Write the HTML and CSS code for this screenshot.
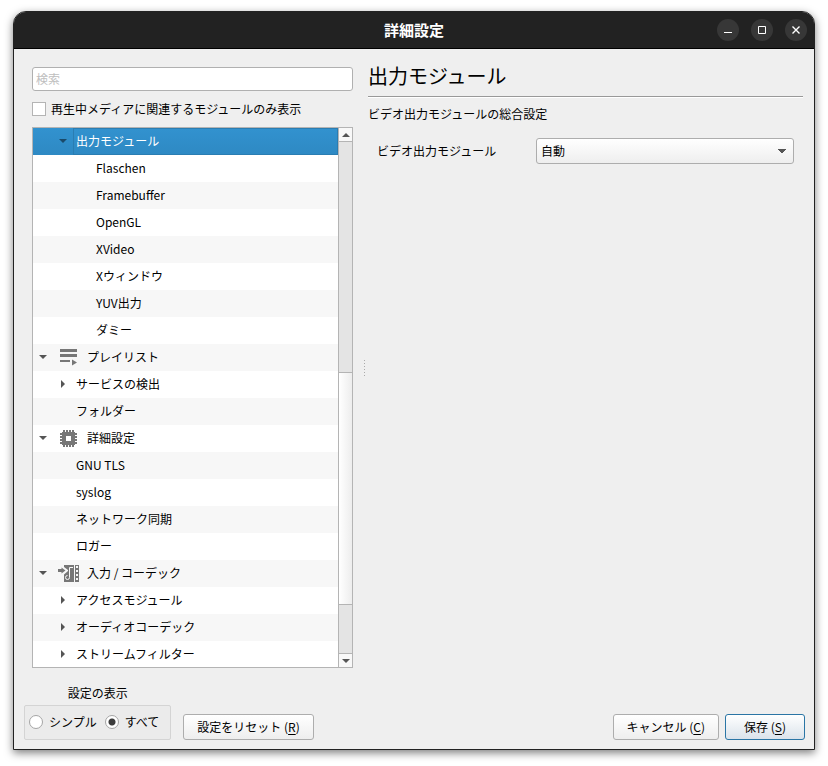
FILE: index.html
```html
<!DOCTYPE html>
<html lang="ja">
<head>
    <meta charset="UTF-8">
    <meta name="viewport" content="width=device-width, initial-scale=1.0">
    <title>詳細設定</title>
    <link rel="stylesheet" href="styles.css">
</head>
<body>

    <div class="window">
        <!-- Title bar -->
        <header class="titlebar">
            <h1>詳細設定</h1>
            <div class="window-buttons">
                <button type="button" aria-label="最小化"><svg width="22" height="22"><path d="M7 13.5h8"/></svg></button>
                <button type="button" aria-label="最大化"><svg width="22" height="22"><path d="M7.5 7.5h7v7h-7z"/></svg></button>
                <button type="button" aria-label="閉じる"><svg width="22" height="22"><path stroke-width="1.4" d="M7.500 7.500l7 7M14.500 7.500l-7 7"/></svg></button>
            </div>
        </header>

        <form class="content">
            <div class="panes">
                <!-- Module tree -->
                <section class="sidebar">
                    <input type="text" class="search" placeholder="検索" aria-label="検索">
                    <label class="only-current"><input type="checkbox"> 再生中メディアに関連するモジュールのみ表示</label>

                    <div class="tree">
                        <ul class="rows">
                            <li class="level-2 selected"><i class="arrow open"></i><span>出力モジュール</span></li>
                            <li class="level-3"><span>Flaschen</span></li>
                            <li class="level-3"><span>Framebuffer</span></li>
                            <li class="level-3"><span>OpenGL</span></li>
                            <li class="level-3"><span>XVideo</span></li>
                            <li class="level-3"><span>Xウィンドウ</span></li>
                            <li class="level-3"><span>YUV出力</span></li>
                            <li class="level-3"><span>ダミー</span></li>
                            <li class="level-1">
                                <i class="arrow open"></i>
                                <svg class="icon" width="20" height="20" viewBox="0 0 20 20"><path d="M1 2h17v3H1zM1 7h17v3H1zM1 13h10v2H1zM13 12.500l5 3-5 3z"/></svg>
                                <span>プレイリスト</span>
                            </li>
                            <li class="level-2"><i class="arrow"></i><span>サービスの検出</span></li>
                            <li class="level-2"><span>フォルダー</span></li>
                            <li class="level-1">
                                <i class="arrow open"></i>
                                <svg class="icon" width="20" height="20" viewBox="0 0 20 20">
                                    <path fill-rule="evenodd" d="M3 4h13v13H3zM7 8v5h5V8z"/>
                                    <path d="M4 2h2v3H4zM13 2h2v3h-2zM4 16h2v3H4zM13 16h2v3h-2zM7 2h2v3H7zM10 2h2v3h-2zM7 16h2v3H7zM10 16h2v3h-2zM1 5h3v2H1zM15 5h3v2h-3zM1 14h3v2H1zM15 14h3v2h-3zM1 8h3v2H1zM1 11h3v2H1zM15 8h3v2h-3zM15 11h3v2h-3z"/>
                                </svg>
                                <span>詳細設定</span>
                            </li>
                            <li class="level-2"><span>GNU TLS</span></li>
                            <li class="level-2"><span>syslog</span></li>
                            <li class="level-2"><span>ネットワーク同期</span></li>
                            <li class="level-2"><span>ロガー</span></li>
                            <li class="level-1">
                                <i class="arrow open"></i>
                                <svg class="icon" width="20" height="20" viewBox="0 0 20 20">
                                    <path d="M-1 6h3.500V4.500L6.500 7.500l-4 3V9H-1z"/>
                                    <path d="M5 2h10v17H5v-7.500L9 8V7L5 4z"/>
                                    <path fill-rule="evenodd" d="M16 2h4v17h-4zM17 3v2h2V3zM17 7v2h2V7zM17 11v2h2v-2zM17 15v2h2v-2z"/>
                                    <path class="note" d="M14 4.500h-3.500v10a2 2 0 1 1-2-2"/>
                                </svg>
                                <span>入力 / コーデック</span>
                            </li>
                            <li class="level-2"><i class="arrow"></i><span>アクセスモジュール</span></li>
                            <li class="level-2"><i class="arrow"></i><span>オーディオコーデック</span></li>
                            <li class="level-2"><i class="arrow"></i><span>ストリームフィルター</span></li>
                        </ul>
                        <div class="scrollbar">
                            <div class="scroll-button up"></div>
                            <div class="track"><div class="thumb"></div></div>
                            <div class="scroll-button down"></div>
                        </div>
                    </div>
                </section>

                <div class="splitter"></div>

                <!-- Settings of the selected module -->
                <section class="settings">
                    <h2>出力モジュール</h2>
                    <p>ビデオ出力モジュールの総合設定</p>
                    <div class="field">
                        <label for="vout">ビデオ出力モジュール</label>
                        <select id="vout"><option>自動</option></select>
                    </div>
                </section>
            </div>

            <!-- Bottom row -->
            <footer class="actions">
                <fieldset>
                    <legend>設定の表示</legend>
                    <div class="modes">
                        <label><input type="radio" name="mode"> シンプル</label>
                        <label><input type="radio" name="mode" checked> すべて</label>
                    </div>
                </fieldset>
                <button type="button" class="btn reset">設定をリセット (<u>R</u>)</button>
                <button type="button" class="btn cancel">キャンセル (<u>C</u>)</button>
                <button type="submit" class="btn save">保存 (<u>S</u>)</button>
            </footer>
        </form>
    </div>

</body>
</html>
```
FILE: styles.css
```css
* {
    box-sizing: border-box;
}
body {
    margin: 0;
    padding: 11px 13px 17px;
    min-height: 100vh;
    display: flex;
    background: #fff;
    color: #000;
    font-family: "Noto Sans CJK JP", sans-serif;
    font-size: 12px;
    line-height: 18px;
}
button, input, select {
    font: inherit;
    color: inherit;
    margin: 0;
}
.window {
    flex: 1;
    display: flex;
    flex-direction: column;
    border: 1px solid #222;
    border-radius: 13px 13px 0 0;
    background: #efefef;
    box-shadow: 0 3px 8px rgba(0, 0, 0, 0.5);
    overflow: hidden;
}
/* Title bar */
.titlebar {
    display: grid;
    grid-template-columns: 1fr auto 1fr;
    align-items: center;
    height: 37px;
    padding: 0 7px;
    background: #222;
    border-bottom: 1px solid #000;
    color: #fff;
}
.titlebar h1 {
    grid-column: 2;
    margin: 0;
    font-size: 15px;
    font-weight: bold;
}
.window-buttons {
    display: flex;
    justify-content: flex-end;
    gap: 12px;
}
.window-buttons button {
    width: 22px;
    height: 22px;
    padding: 0;
    border: none;
    border-radius: 50%;
    background: #373737;
}
.window-buttons svg {
    display: block;
    fill: none;
    stroke: #fff;
}
.content {
    flex: 1;
    display: flex;
    flex-direction: column;
    padding: 18px 9px 9px 10px;
}
.panes {
    flex: 1;
    display: flex;
    padding: 0 2px 0 8px;
}
/* Module tree */
.sidebar {
    width: 321px;
    display: flex;
    flex-direction: column;
}
.search {
    width: 100%;
    height: 24px;
    padding: 0 3px 1px;
    border: 1px solid #b0b0b0;
    border-radius: 3px;
    background: #fff;
}
.search::placeholder {
    color: #bebebe;
}
.only-current {
    display: flex;
    align-items: center;
    gap: 5px;
    margin: 9px 0;
}
input[type="checkbox"] {
    appearance: none;
    width: 14px;
    height: 14px;
    border: 1px solid #b4b4b4;
    background: #fff;
}
.tree {
    flex: 1;
    display: flex;
    border: 1px solid #b4b4b4;
    background: #fff;
}
.rows {
    flex: 1;
    margin: 0;
    padding: 0;
    list-style: none;
}
.rows li {
    position: relative;
    display: flex;
    align-items: center;
    height: 27px;
    padding-bottom: 1px;
}
.rows li:nth-child(odd) {
    background: #f7f7f7;
}
.rows li:last-child {
    height: 26px;
    padding-bottom: 0;
}
.rows .level-1 {
    padding-left: 26px;
    gap: 8px;
}
.rows .level-2 {
    padding-left: 43px;
}
.rows .level-3 {
    padding-left: 63px;
}
.rows li.selected:first-child {
    background: linear-gradient(#3292cf, #2e89c3);
    color: #fff;
}
.selected::before {
    content: "";
    position: absolute;
    inset: 0 0 0 40px;
    border: 1px solid #2a7db2;
}
.icon {
    fill: #777;
    overflow: visible;
}
.note {
    fill: none;
    stroke: #f7f7f7;
}
.arrow {
    position: absolute;
    left: 28px;
    border: 4px solid transparent;
    border-left-color: #555;
    border-right-width: 0;
}
.arrow.open {
    left: 26px;
    border: 4px solid transparent;
    border-top-color: #555;
    border-bottom-width: 0;
}
.level-1 .arrow.open {
    left: 6px;
}
.selected .arrow.open {
    border-top-color: #1a4a6a;
}
.scrollbar {
    display: flex;
    flex-direction: column;
    width: 14px;
    border-left: 1px solid #b4b4b4;
    background: #e4e4e4;
}
.scroll-button {
    display: flex;
    align-items: center;
    justify-content: center;
    height: 14px;
    background: #f8f8f8;
}
.scroll-button::before {
    content: "";
    border: 4px solid transparent;
}
.up {
    border-bottom: 1px solid #b4b4b4;
}
.up::before {
    border-bottom-color: #555;
    border-top-width: 0;
}
.down {
    border-top: 1px solid #b4b4b4;
}
.down::before {
    border-top-color: #555;
    border-bottom-width: 0;
}
.track {
    flex: 1;
    display: flex;
    flex-direction: column;
    justify-content: flex-end;
    padding-bottom: 48px;
}
.thumb {
    height: 233px;
    border: solid #b4b4b4;
    border-width: 1px 0;
    background: linear-gradient(90deg, #fff, #ededed);
}
.splitter {
    align-self: center;
    width: 15px;
    height: 16px;
    background: linear-gradient(#aaa 1px, transparent 1px) 11px 0 / 1px 3px repeat-y;
}
/* Settings */
.settings {
    flex: 1;
}
.settings h2 {
    margin: 0;
    padding-bottom: 11px;
    border-bottom: 1px solid #999;
    box-shadow: 0 1px #fff;
    font-size: 20px;
    font-weight: normal;
    line-height: 18px;
}
.settings p {
    margin: 8px 0 15px;
}
.field {
    display: grid;
    grid-template-columns: 159px 1fr;
    align-items: center;
    padding: 0 9px;
}
select {
    appearance: none;
    height: 26px;
    padding: 0 4px 1px;
    border: 1px solid #adadad;
    border-radius: 3px;
    background: conic-gradient(from -45deg at 50% 100%, #555 90deg, transparent 0) right 7px center / 8px 4px no-repeat, linear-gradient(#fff, #eee);
}
/* Bottom row */
.actions {
    display: flex;
    align-items: flex-end;
    margin-top: 16px;
}
fieldset {
    margin: 0 12px 0 0;
    padding: 0;
    border: none;
}
legend {
    margin: 0 auto;
    padding: 0;
}
.modes {
    display: flex;
    gap: 8px;
    margin-top: 3px;
    padding: 7px 11px 8px 4px;
    border: 1px solid #d4d4d4;
    border-radius: 2px;
    background: #ebebeb;
}
.modes label {
    display: flex;
    align-items: center;
    gap: 6px;
}
input[type="radio"] {
    appearance: none;
    width: 14px;
    height: 14px;
    border: 1px solid #a5a5a5;
    border-radius: 50%;
    background: #fff;
}
input[type="radio"]:checked {
    background: radial-gradient(circle, #3c3c3c 3px, #fff 4px);
}
.btn {
    height: 26px;
    padding: 0 13px;
    border: 1px solid #adadad;
    border-radius: 3px;
    background: linear-gradient(#fff, #eee);
}
.btn u {
    text-underline-offset: 2px;
}
.cancel {
    margin-left: auto;
}
.save {
    margin-left: 6px;
    padding: 0 18px;
    border-color: #2a75a5;
    background: linear-gradient(#fff, #dbe3eb);
}
```
